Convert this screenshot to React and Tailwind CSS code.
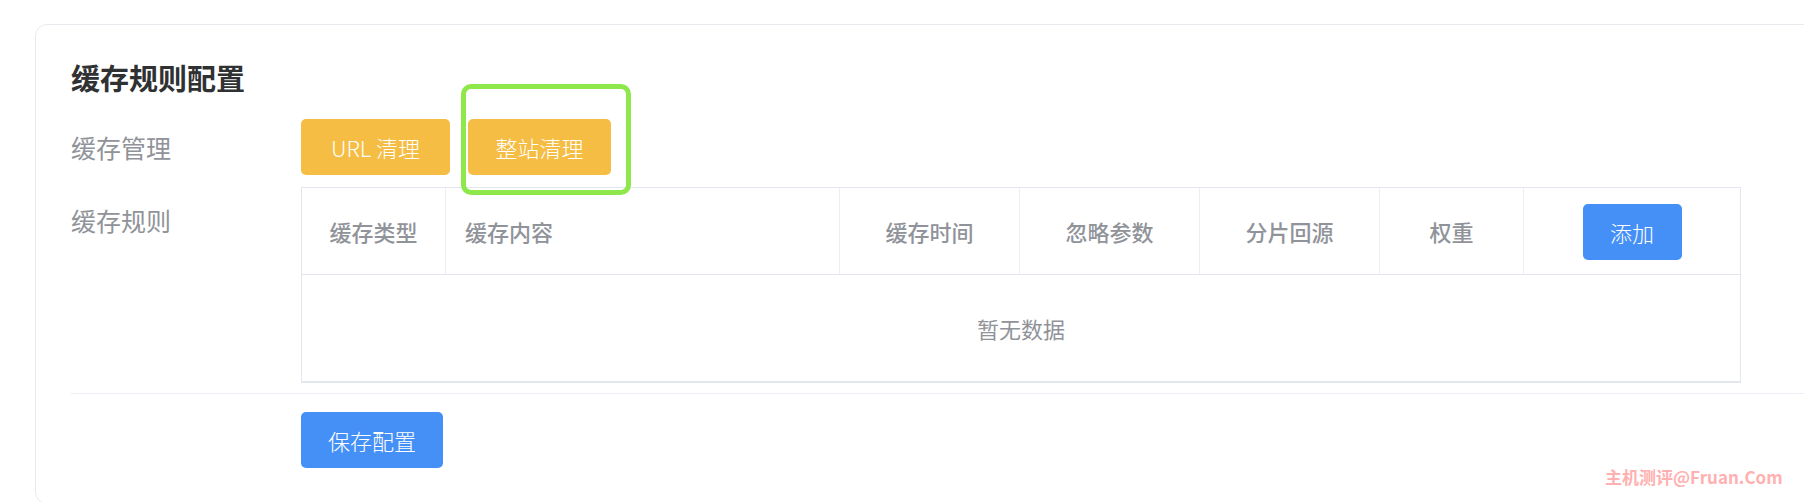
import React from "react";

const columns = [
  { title: "缓存类型", align: "center" },
  { title: "缓存内容", align: "left" },
  { title: "缓存时间", align: "center" },
  { title: "忽略参数", align: "center" },
  { title: "分片回源", align: "center" },
  { title: "权重", align: "center" },
];

const App = () => {
  return (
    <div className="relative h-[502px] w-[1804px] overflow-hidden bg-white font-['Noto_Sans_CJK_SC','Noto_Sans',sans-serif]">
      <div className="ml-[35px] mt-[24px] h-[480px] w-[1820px] rounded-[12px] border border-[#e8eaf0]">
        <div className="pl-[35px] pt-[38px]">
          <h2 className="text-[29px] font-bold leading-[29px] text-[#303133]">缓存规则配置</h2>

          <div className="mt-[27px] flex items-center">
            <div className="w-[230px] text-[25px] leading-[36px] text-[#909399]">缓存管理</div>
            <div className="flex gap-[18px]">
              <button className="h-[56px] w-[149px] rounded-[5px] bg-[#f5bd43] text-[22px] font-light text-white">
                URL 清理
              </button>
              <button className="h-[56px] w-[143px] rounded-[5px] bg-[#f5bd43] text-[22px] font-light text-white">
                整站清理
              </button>
            </div>
          </div>

          <div className="mt-[12px] flex">
            <div className="w-[230px] pt-[15px] text-[25px] leading-[36px] text-[#909399]">缓存规则</div>
            <div className="w-[1440px] border border-b-2 border-[#e3e6ee]">
              <div className="grid h-[87px] grid-cols-[144px_394px_180px_180px_180px_144px_1fr] border-b border-[#e3e6ee]">
                {columns.map((col) => (
                  <div
                    key={col.title}
                    className={
                      col.align === "left"
                        ? "flex items-center border-r border-[#ebeef5] pl-[19px] text-[22px] font-medium text-[#909399]"
                        : "flex items-center justify-center border-r border-[#ebeef5] text-[22px] font-medium text-[#909399]"
                    }
                  >
                    {col.title}
                  </div>
                ))}
                <div className="flex items-center justify-center">
                  <button className="mt-[2px] h-[56px] w-[99px] rounded-[5px] bg-[#4590f6] text-[22px] font-light text-white">
                    添加
                  </button>
                </div>
              </div>
              <div className="flex h-[106px] items-center justify-center text-[22px] text-[#909399]">
                暂无数据
              </div>
            </div>
          </div>

          <div className="mt-[10px] border-t border-[#ebeef5]" />

          <div className="mt-[18px] pl-[230px]">
            <button className="h-[56px] w-[142px] rounded-[5px] bg-[#4590f6] text-[22px] font-light text-white">
              保存配置
            </button>
          </div>
        </div>
      </div>

      {/* screenshot annotation */}
      <div className="absolute left-[461px] top-[84px] h-[111px] w-[170px] rounded-[10px] border-[5px] border-[#8ee84c]" />

      {/* watermark */}
      <div className="absolute left-[1605px] top-[465px] text-[17px] font-bold leading-[24px] text-[#ffb0b0]">
        主机测评@Fruan.Com
      </div>
    </div>
  );
};

export default App;
